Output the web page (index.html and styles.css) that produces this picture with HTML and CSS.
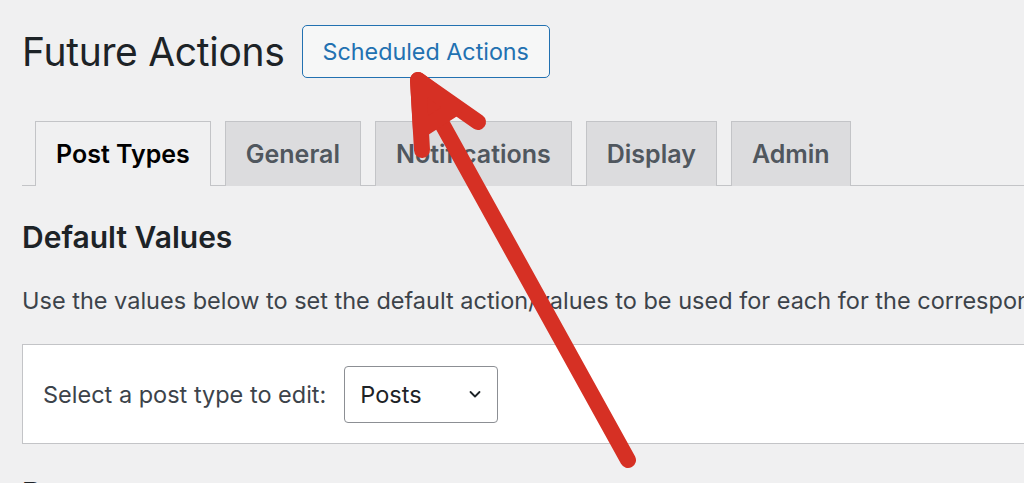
FILE: index.html
```html
<!DOCTYPE html>
<html lang="en">
<head>
<meta charset="utf-8">
<title>Future Actions</title>
<link rel="stylesheet" href="styles.css">
</head>
<body>
<div class="wrap">
  <div class="title-row">
    <h1 class="page-title">Future Actions</h1>
    <a class="page-action" href="#">Scheduled Actions</a>
  </div>
  <nav class="tabs">
    <a class="tab tab-active" href="#">Post Types</a>
    <a class="tab" href="#">General</a>
    <a class="tab" href="#">Notifications</a>
    <a class="tab" href="#">Display</a>
    <a class="tab" href="#">Admin</a>
  </nav>
  <h2 class="section-title">Default Values</h2>
  <p class="section-desc">Use the values below to set the default action/values to be used for each for the corresponding post types.</p>
  <div class="panel">
    <label class="panel-label" for="pt">Select a post type to edit:</label>
    <div class="select">
      <span class="select-value">Posts</span>
      <svg class="select-chevron" width="16" height="16" viewBox="0 0 16 16"><path d="M3.5 6 L8 10.5 L12.5 6" fill="none" stroke="#1d2327" stroke-width="1.8" stroke-linecap="round" stroke-linejoin="round"/></svg>
    </div>
  </div>
  <h2 class="section-title sub">Posts</h2>
</div>
<svg class="annotation" width="1024" height="483" viewBox="0 0 1024 483">
  <g fill="none" stroke="#d63024" stroke-width="16" stroke-linecap="round" stroke-linejoin="round">
    <line x1="628" y1="460" x2="420" y2="84"/>
    <polyline points="422,150 418,80 478,122"/>
    <polygon points="418,80 421,130 455,108" fill="#d63024"/>
  </g>
</svg>
</body>
</html>
```
FILE: styles.css
```css
html, body {
  margin: 0;
  padding: 0;
  background: #f0f0f1;
  overflow: hidden;
  height: 483px;
}
body {
  font-family: Inter, "Liberation Sans", sans-serif;
  color: #3c434a;
  position: relative;
}
.wrap {
  padding-left: 22px;
}
.title-row {
  display: flex;
  align-items: center;
  gap: 17px;
  padding-top: 25px;
  height: 53px;
}
.page-title {
  margin: 0;
  font-size: 39px;
  font-weight: 400;
  color: #1d2327;
  letter-spacing: -0.3px;
}
.page-action {
  display: flex;
  align-items: center;
  box-sizing: border-box;
  height: 53px;
  padding: 0 20px;
  border: 1.5px solid #2271b1;
  border-radius: 5px;
  background: #f6f7f7;
  color: #2271b1;
  font-size: 23.3px;
  text-decoration: none;
}
.tabs {
  display: flex;
  gap: 14px;
  margin-top: 43px;
  padding-left: 13px;
  border-bottom: 1.5px solid #c3c4c7;
  height: 64px;
}
.tab {
  display: flex;
  align-items: center;
  box-sizing: border-box;
  height: 65px;
  padding: 0 20px;
  border: 1.5px solid #c3c4c7;
  border-bottom: none;
  background: #dcdcde;
  color: #50575e;
  font-size: 25px;
  font-weight: 600;
  text-decoration: none;
}
.tab-active {
  background: #f0f0f1;
  color: #000;
}
.section-title {
  margin: 32px 0 0;
  font-size: 30px;
  font-weight: 600;
  color: #1d2327;
  line-height: 38px;
}
.section-desc {
  margin: 29px 0 0;
  font-size: 23.5px;
  line-height: 32px;
  white-space: nowrap;
}
.panel {
  display: flex;
  align-items: center;
  gap: 18px;
  box-sizing: border-box;
  height: 100px;
  margin-top: 27px;
  padding-left: 20px;
  background: #fff;
  border: 1.5px solid #c3c4c7;
  border-right: none;
}
.panel-label {
  font-size: 23.5px;
  color: #3c434a;
}
.select {
  display: flex;
  align-items: center;
  justify-content: space-between;
  box-sizing: border-box;
  width: 154px;
  height: 57px;
  padding: 0 14px 0 15px;
  border: 1.5px solid #8c8f94;
  border-radius: 4px;
  background: #fff;
  color: #1d2327;
  font-size: 23.5px;
}
.section-title.sub {
  margin-top: 30px;
}
.annotation {
  position: absolute;
  left: 0;
  top: 0;
  pointer-events: none;
}
```
